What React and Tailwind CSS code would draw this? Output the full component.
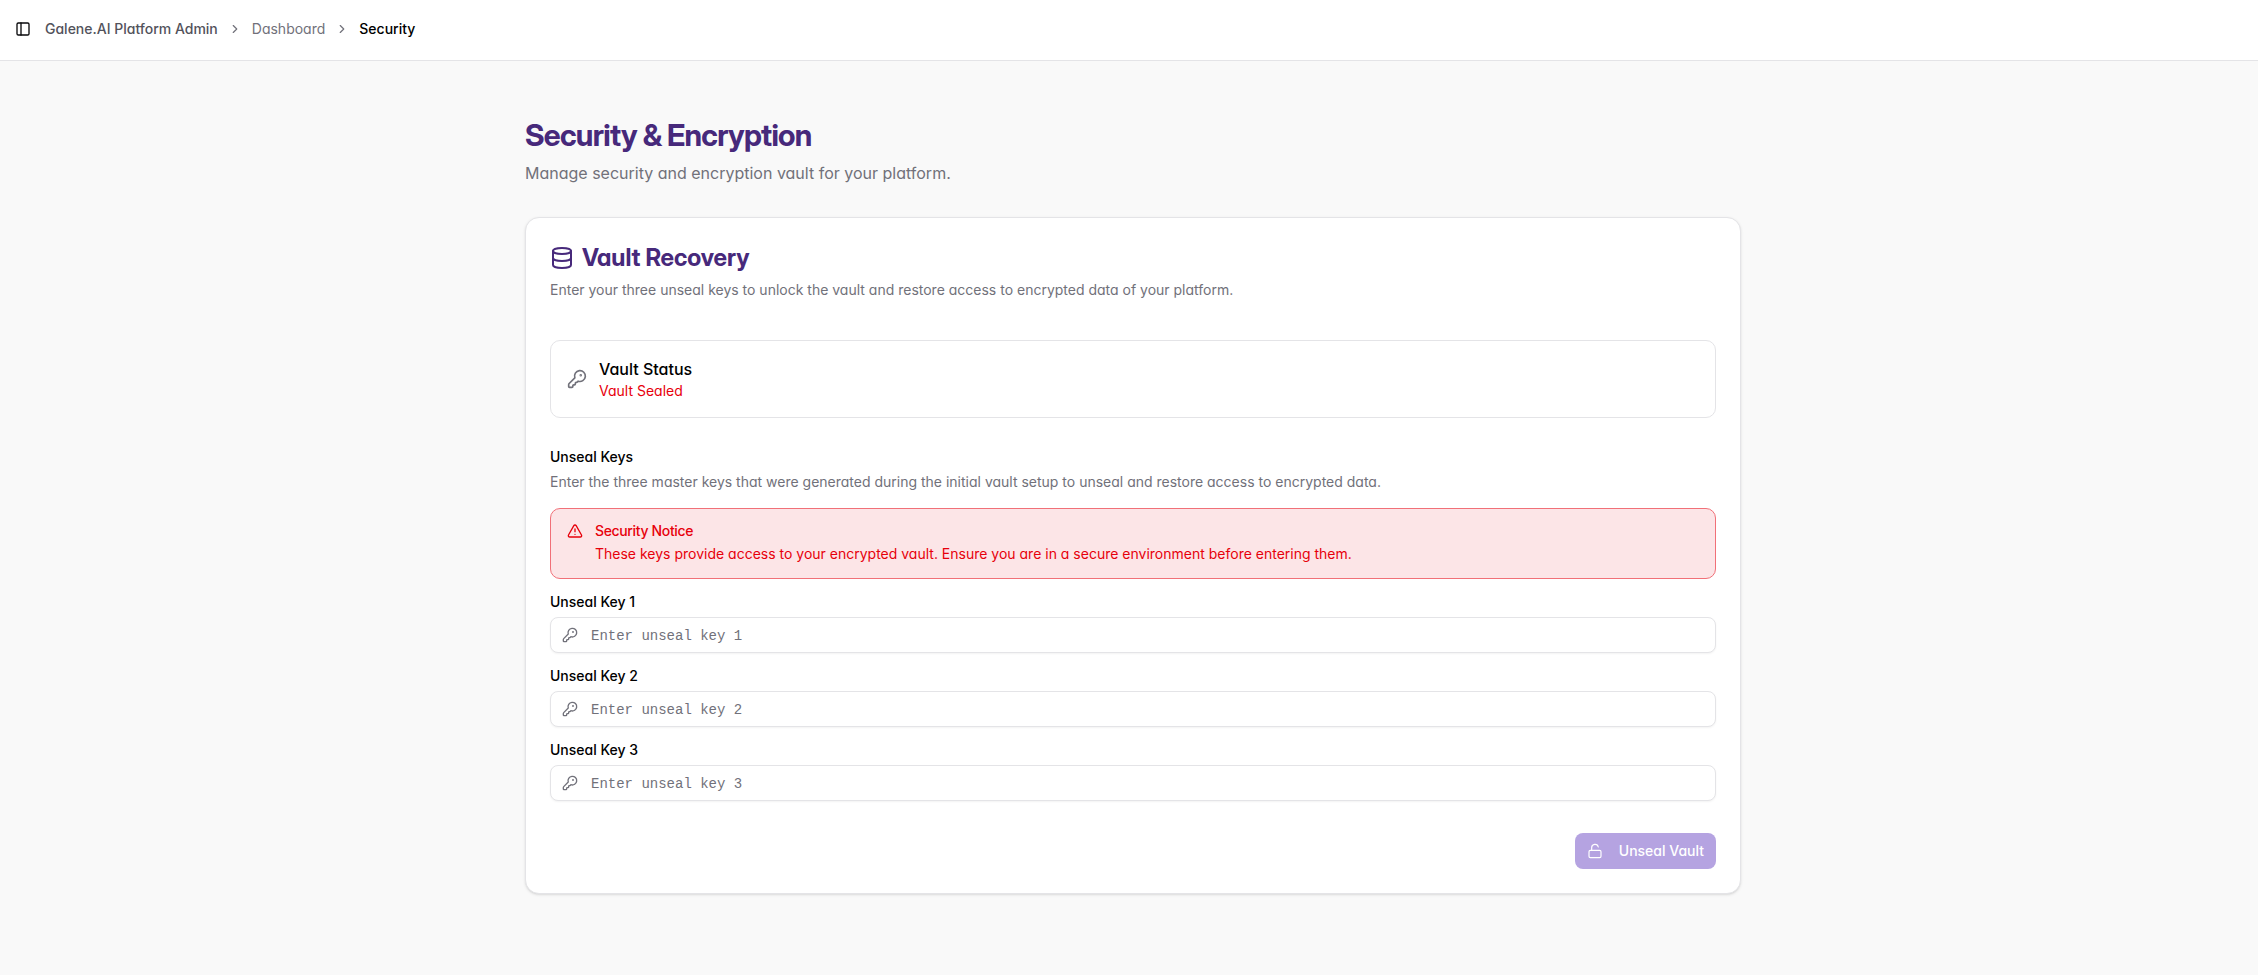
import React from "react";
import { PanelLeft, ChevronRight, Database, KeyRound, TriangleAlert, LockOpen } from "lucide-react";

function Header() {
  return (
    <header className="flex h-[61px] items-center gap-2 border-b border-[#e4e4e7] bg-white pb-0.5 pl-[9px]">
      <button type="button" aria-label="Toggle sidebar" className="flex size-7 items-center justify-center text-[#09090b]">
        <PanelLeft className="size-4" />
      </button>
      <nav aria-label="Breadcrumb">
        <ol className="flex items-center gap-2.5 text-sm text-[#71717a]">
          <li><a href="#" className="font-medium text-[#52525b]">Galene.AI Platform Admin</a></li>
          <li aria-hidden="true"><ChevronRight className="size-3.5" /></li>
          <li><a href="#">Dashboard</a></li>
          <li aria-hidden="true"><ChevronRight className="size-3.5" /></li>
          <li aria-current="page" className="font-medium text-black">Security</li>
        </ol>
      </nav>
    </header>
  );
}

function UnsealKeyField({ number }) {
  const id = "unseal-key-" + number;
  return (
    <div className="flex flex-col gap-2">
      <label htmlFor={id} className="text-sm leading-[14px] font-medium">Unseal Key {number}</label>
      <div className="relative">
        <KeyRound className="absolute top-1/2 left-3 size-4 -translate-y-1/2 text-[#71717a]" />
        <input
          id={id}
          type="text"
          placeholder={"Enter unseal key " + number}
          className="h-9 w-full rounded-lg border border-[#e4e4e7] bg-white pt-0.5 pr-3 pl-10 font-['Liberation_Mono',monospace] text-sm shadow-xs outline-none placeholder:text-[#71717a]"
        />
      </div>
    </div>
  );
}

export default function App() {
  return (
    <div className="min-h-screen bg-[#f9f9f9] font-['Inter',sans-serif] text-black [font-feature-settings:'cv11']">
      <Header />
      <div className="pl-2">
        <main className="mx-auto flex max-w-7xl flex-col gap-8 px-8 py-14">
          <div className="flex flex-col gap-2">
            <h1 className="font-['Inter_Display','Inter',sans-serif] text-3xl leading-9 font-bold tracking-tight text-[#47297b]">Security &amp; Encryption</h1>
            <p className="leading-6 text-[#71717a]">Manage security and encryption vault for your platform.</p>
          </div>

          <section className="flex flex-col rounded-[14px] border border-[#e4e4e7] bg-white p-6 shadow-sm">
            <div className="flex flex-col gap-1.5">
              <h2 className="flex items-center gap-2 font-['Inter_Display','Inter',sans-serif] text-2xl leading-8 font-bold text-[#47297b]">
                <Database className="size-6" />
                Vault Recovery
              </h2>
              <p className="text-sm leading-5 text-[#71717a]">
                Enter your three unseal keys to unlock the vault and restore access to encrypted data of your platform.
              </p>
            </div>

            <div className="mt-10 flex items-center gap-3 rounded-[10px] border border-[#e4e4e7] p-4">
              <KeyRound className="size-5 text-[#71717a]" />
              <div>
                <h3 className="leading-6 font-medium">Vault Status</h3>
                <p className="text-sm leading-5 text-[#e7000b]">Vault Sealed</p>
              </div>
            </div>

            <form className="mt-8 flex flex-col gap-4">
              <div className="flex flex-col gap-2">
                <h3 className="text-sm leading-[14px] font-medium">Unseal Keys</h3>
                <p className="text-sm leading-5 text-[#71717a]">
                  Enter the three master keys that were generated during the initial vault setup to unseal and restore access to encrypted data.
                </p>
              </div>

              <div role="alert" className="flex gap-3 rounded-[10px] border border-[#f17078] bg-[#fce5e7] px-4 pt-3 pb-3.5 text-sm text-[#e7000b]">
                <TriangleAlert className="mt-0.5 size-4 shrink-0" />
                <div className="flex flex-col gap-0.5">
                  <p className="leading-5 font-medium tracking-tight">Security Notice</p>
                  <p className="leading-[21px]">
                    These keys provide access to your encrypted vault. Ensure you are in a secure environment before entering them.
                  </p>
                </div>
              </div>

              <UnsealKeyField number={1} />
              <UnsealKeyField number={2} />
              <UnsealKeyField number={3} />

              <div className="mt-4 flex justify-end">
                <button type="submit" disabled className="flex h-9 items-center gap-4 rounded-lg bg-[#b5a3e1] px-3 text-sm font-medium text-white">
                  <LockOpen className="size-4" strokeWidth={1.75} />
                  Unseal Vault
                </button>
              </div>
            </form>
          </section>
        </main>
      </div>
    </div>
  );
}
